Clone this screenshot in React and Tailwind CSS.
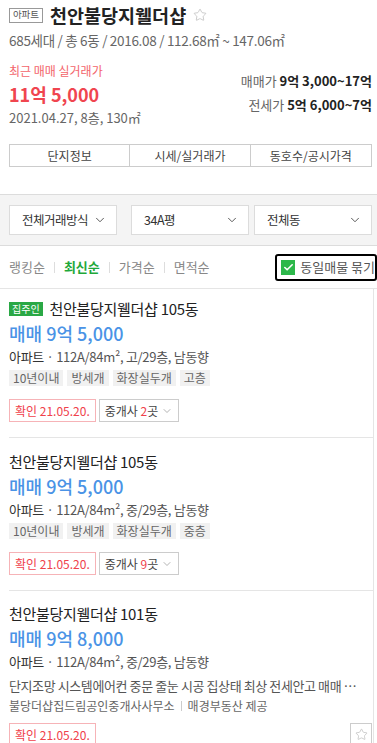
import { ChevronDown, Check, Star } from "lucide-react";

const listings = [
  {
    owner: true,
    title: "천안불당지웰더샵 105동",
    price: "매매 9억 5,000",
    detail: "112A/84m², 고/29층, 남동향",
    tags: ["10년이내", "방세개", "화장실두개", "고층"],
    agents: "2",
    pt: "pt-[10px]",
  },
  {
    owner: false,
    title: "천안불당지웰더샵 105동",
    price: "매매 9억 5,000",
    detail: "112A/84m², 중/29층, 남동향",
    tags: ["10년이내", "방세개", "화장실두개", "중층"],
    agents: "9",
    pt: "pt-[14px]",
  },
];

function Dropdown({ label, w }) {
  return (
    <div
      className={`${w} h-[30px] bg-white border border-[#dcdcdc] flex items-center justify-between pl-[12px] pr-[9px] text-[12.5px] text-[#333] whitespace-nowrap tracking-[-0.5px]`}
    >
      <span>{label}</span>
      <ChevronDown className="w-[14px] h-[14px] text-[#444] shrink-0" strokeWidth={1.5} />
    </div>
  );
}

function ConfirmBadge() {
  return (
    <span className="h-[23px] px-[5px] flex items-center border border-[#f6b3b7] text-[#f0414b] text-[12px]">
      확인 21.05.20.
    </span>
  );
}

export default function App() {
  return (
    <div className="w-[377px] h-[743px] overflow-hidden bg-white font-['Noto_Sans_CJK_KR',sans-serif] text-[#222]">
      {/* Header */}
      <div className="pl-[9px] pr-[5px]">
        <div className="pt-[4px] h-[26px] flex items-center gap-[7px]">
          <span className="h-[15px] w-[34px] border border-[#999] text-[9.5px] text-[#555] flex items-center justify-center leading-none">
            아파트
          </span>
          <h1 className="text-[18.5px] font-bold leading-[22px]">천안불당지웰더샵</h1>
          <Star className="w-[14px] h-[14px] text-[#bbb]" strokeWidth={1.3} />
        </div>
        <p className="mt-[6px] h-[16px] leading-[16px] text-[13.5px] text-[#666] tracking-[-0.3px]">
          685세대 / 총 6동 / 2016.08 / 112.68㎡ ~ 147.06㎡
        </p>

        <div className="mt-[15px] flex justify-between">
          <div>
            <p className="h-[16px] leading-[16px] text-[12px] text-[#f3646b]">최근 매매 실거래가</p>
            <p className="mt-[5px] h-[20px] leading-[20px] text-[18px] font-bold text-[#f0454f]">11억 5,000</p>
            <p className="mt-[6px] h-[16px] leading-[16px] text-[13px] text-[#666]">2021.04.27, 8층, 130㎡</p>
          </div>
          <div className="pt-[10px] text-right text-[13px]">
            <p className="h-[16px] leading-[16px]">
              <span className="text-[#666]">매매가 </span>
              <span className="font-bold text-[#222]">9억 3,000~17억</span>
            </p>
            <p className="mt-[8px] h-[16px] leading-[16px]">
              <span className="text-[#666]">전세가 </span>
              <span className="font-bold text-[#222]">5억 6,000~7억</span>
            </p>
          </div>
        </div>

        <div className="mt-[18px] h-[23px] grid grid-cols-3 border border-[#ccc] text-[12px] text-[#444]">
          <div className="flex items-center justify-center border-r border-[#ccc]">단지정보</div>
          <div className="flex items-center justify-center border-r border-[#ccc]">시세/실거래가</div>
          <div className="flex items-center justify-center">동호수/공시가격</div>
        </div>
      </div>

      {/* Filters */}
      <div className="mt-[27px] h-[52px] bg-[#f4f4f4] border-y border-[#dcdcdc] flex items-center pl-[9px]">
        <Dropdown label="전체거래방식" w="w-[108px]" />
        <div className="w-[14px]" />
        <Dropdown label="34A평" w="w-[118px]" />
        <div className="w-[5px]" />
        <Dropdown label="전체동" w="w-[118px]" />
      </div>

      {/* Sort row */}
      <div className="h-[43px] flex items-center justify-between pl-[9px] border-b border-[#e5e5e5]">
        <div className="flex items-center text-[13px] text-[#888]">
          <span>랭킹순</span>
          <span className="mx-[9px] w-px h-[11px] bg-[#ddd]" />
          <span className="font-bold text-[#1fa83a]">최신순</span>
          <span className="mx-[9px] w-px h-[11px] bg-[#ddd]" />
          <span>가격순</span>
          <span className="mx-[9px] w-px h-[11px] bg-[#ddd]" />
          <span>면적순</span>
        </div>
        <div className="h-[27px] w-[102px] border-2 border-black rounded-[3px] flex items-center pl-[4px] gap-[5px] text-[13px] text-[#555]">
          <span className="w-[15px] h-[15px] bg-[#2db84b] flex items-center justify-center">
            <Check className="w-[11px] h-[11px] text-white" strokeWidth={3.5} />
          </span>
          <span className="whitespace-nowrap">동일매물 묶기</span>
        </div>
      </div>

      {/* Listings */}
      <div className="pl-[9px]">
        <div className="border-r border-[#e5e5e5] mr-[3px]">
          {listings.map((l, i) => (
            <div key={i} className={`${l.pt} pb-[15px] ${i > 0 ? "border-t border-[#e5e5e5]" : ""}`}>
              <div className="h-[20px] flex items-center gap-[7px]">
                {l.owner && (
                  <span className="h-[14px] px-[3px] bg-[#2aa845] text-white text-[10px] leading-[14px]">
                    집주인
                  </span>
                )}
                <span className="text-[15px] leading-[20px] tracking-[-0.3px]">{l.title}</span>
              </div>
              <p className="mt-[3px] h-[22px] leading-[22px] text-[18px] font-medium text-[#4a93e6]">{l.price}</p>
              <p className="mt-[4px] h-[18px] leading-[18px] text-[13px] text-[#555] tracking-[-0.3px]">
                <span className="text-[#333]">아파트</span> · {l.detail}
              </p>
              <div className="mt-[4px] flex gap-[4px]">
                {l.tags.map((t) => (
                  <span key={t} className="h-[16px] px-[4px] bg-[#f1f1f1] text-[12px] leading-[16px] text-[#666]">
                    {t}
                  </span>
                ))}
              </div>
              <div className="mt-[13px] flex gap-[3px]">
                <ConfirmBadge />
                <span className="h-[23px] px-[5px] flex items-center gap-[3px] border border-[#ccc] text-[12px] text-[#444]">
                  <span>
                    중개사 <span className="text-[#f0414b]">{l.agents}</span>곳
                  </span>
                  <ChevronDown className="w-[12px] h-[12px] text-[#999]" strokeWidth={1.5} />
                </span>
              </div>
            </div>
          ))}

          <div className="pt-[13px] border-t border-[#e5e5e5] pr-[2px]">
            <div className="h-[20px] flex items-center">
              <span className="text-[15px] leading-[20px] tracking-[-0.3px]">천안불당지웰더샵 101동</span>
            </div>
            <p className="mt-[3px] h-[22px] leading-[22px] text-[18px] font-medium text-[#4a93e6]">매매 9억 8,000</p>
            <p className="mt-[4px] h-[18px] leading-[18px] text-[13px] text-[#555] tracking-[-0.3px]">
              <span className="text-[#333]">아파트</span> · 112A/84m², 중/29층, 남동향
            </p>
            <p className="mt-[6px] h-[18px] leading-[18px] text-[13px] text-[#555] whitespace-nowrap tracking-[-0.4px]">
              단지조망 시스템에어컨 중문 줄눈 시공 집상태 최상 전세안고 매매 …
            </p>
            <p className="mt-[3px] h-[16px] leading-[16px] text-[12px] text-[#666] flex items-center">
              불당더샵집드림공인중개사사무소
              <span className="mx-[6px] w-px h-[10px] bg-[#ccc]" />
              매경부동산 제공
            </p>
            <div className="mt-[9px] flex justify-between items-end">
              <ConfirmBadge />
              <span className="w-[22px] h-[23px] border border-[#ccc] flex items-center justify-center mr-[-1px]">
                <Star className="w-[13px] h-[13px] text-[#bbb]" strokeWidth={1.3} />
              </span>
            </div>
          </div>
        </div>
      </div>
    </div>
  );
}
